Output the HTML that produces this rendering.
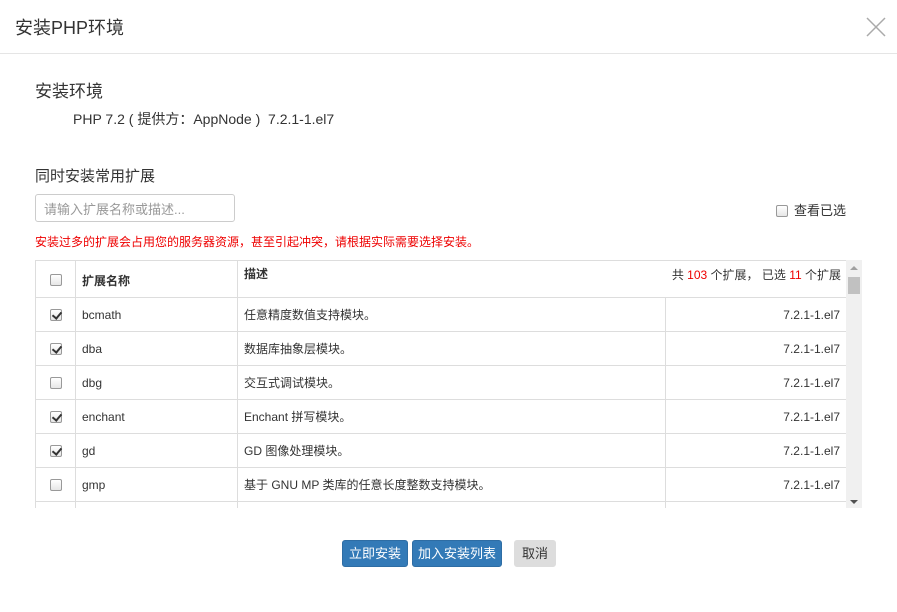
<!DOCTYPE html>
<html><head><meta charset="utf-8"><style>
*{box-sizing:border-box;margin:0;padding:0}
body{width:897px;height:612px;background:#fff;font-family:"Liberation Sans","Noto Sans CJK SC",sans-serif;color:#333;position:relative;overflow:hidden;font-size:12px}
.abs{position:absolute}
.hdr{left:0;top:0;width:897px;height:54px;border-bottom:1px solid #e5e5e5}
.title{left:15px;top:14px;font-size:18px;color:#333}
.cb{display:inline-block;width:12px;height:12px;border:1px solid #999;border-radius:2px;background:linear-gradient(#fff,#e6e6e6);position:relative;vertical-align:middle}
.cb.on::after{content:"";position:absolute;left:3px;top:0px;width:4px;height:7px;border:solid #333;border-width:0 2px 2px 0;transform:rotate(40deg)}
table{border-collapse:collapse;table-layout:fixed}
td,th{border:1px solid #ddd;height:34px;padding:0 6px;font-size:12px;line-height:16px;font-weight:normal;text-align:left;vertical-align:middle}
td span.t,th span.t{display:block;height:16px;line-height:16px;overflow:hidden}
th{font-weight:bold;height:37px}
.btn{position:absolute;top:540px;height:27px;border-radius:3px;color:#fff;background:#337ab7;font-size:13px;text-align:center;line-height:25px;border:1px solid #2e6da4}
</style></head><body>
<div class="abs hdr"></div>
<div class="abs title">安装PHP环境</div>
<svg class="abs" style="left:866px;top:17px" width="20" height="20" viewBox="0 0 20 20"><path d="M1 1L19 19M19 1L1 19" stroke="#aaa" stroke-width="1.5"/></svg>
<div class="abs" style="left:35px;top:77px;font-size:17px">安装环境</div>
<div class="abs" style="left:73px;top:109px;font-size:14px">PHP 7.2 ( 提供方：AppNode )&nbsp; 7.2.1-1.el7</div>
<div class="abs" style="left:35px;top:165px;font-size:15px">同时安装常用扩展</div>
<div class="abs" style="left:35px;top:194px;width:200px;height:28px;border:1px solid #ccc;border-radius:3px;padding:4px 8px;color:#999;font-size:13px">请输入扩展名称或描述...</div>
<div class="abs" style="left:776px;top:200px;font-size:13px"><span class="cb" style="vertical-align:-2px;margin-right:6px"></span>查看已选</div>
<div class="abs" style="left:35px;top:233px;color:#e00;font-size:12px">安装过多的扩展会占用您的服务器资源，甚至引起冲突，请根据实际需要选择安装。</div>
<div class="abs" style="left:35px;top:260px;width:827px;height:248px;overflow:hidden">
<table style="width:811px">
<colgroup><col style="width:40px"><col style="width:162px"><col style="width:428px"><col style="width:181px"></colgroup>
<tr><th style="text-align:center"><span class="cb"></span></th><th style="padding-top:4px"><span class="t">扩展名称</span></th><th colspan="2" style="vertical-align:top;padding-top:5px;position:relative">描述<span style="position:absolute;right:5px;top:6px;font-weight:normal">共 <span style="color:#e00">103</span> 个扩展， 已选 <span style="color:#e00">11</span> 个扩展</span></th></tr>
<tr><td style="text-align:center"><span class="cb on"></span></td><td><span class="t">bcmath</span></td><td><span class="t">任意精度数值支持模块。</span></td><td style="text-align:right"><span class="t">7.2.1-1.el7</span></td></tr>
<tr><td style="text-align:center"><span class="cb on"></span></td><td><span class="t">dba</span></td><td><span class="t">数据库抽象层模块。</span></td><td style="text-align:right"><span class="t">7.2.1-1.el7</span></td></tr>
<tr><td style="text-align:center"><span class="cb"></span></td><td><span class="t">dbg</span></td><td><span class="t">交互式调试模块。</span></td><td style="text-align:right"><span class="t">7.2.1-1.el7</span></td></tr>
<tr><td style="text-align:center"><span class="cb on"></span></td><td><span class="t">enchant</span></td><td><span class="t">Enchant 拼写模块。</span></td><td style="text-align:right"><span class="t">7.2.1-1.el7</span></td></tr>
<tr><td style="text-align:center"><span class="cb on"></span></td><td><span class="t">gd</span></td><td><span class="t">GD 图像处理模块。</span></td><td style="text-align:right"><span class="t">7.2.1-1.el7</span></td></tr>
<tr><td style="text-align:center"><span class="cb"></span></td><td><span class="t">gmp</span></td><td><span class="t">基于 GNU MP 类库的任意长度整数支持模块。</span></td><td style="text-align:right"><span class="t">7.2.1-1.el7</span></td></tr>
<tr><td></td><td></td><td></td><td></td></tr>
</table>
<div class="abs" style="left:811px;top:0;width:16px;height:248px;background:#f0f0f0">
<div class="abs" style="left:4px;top:6px;border:4px solid transparent;border-bottom:4px solid #a0a0a0;border-top:0"></div>
<div class="abs" style="left:2px;top:17px;width:12px;height:17px;background:#c1c1c1"></div>
<div class="abs" style="left:4px;top:240px;border:4px solid transparent;border-top:4px solid #505050;border-bottom:0"></div>
</div>
</div>
<div class="btn" style="left:342px;width:66px">立即安装</div>
<div class="btn" style="left:412px;width:90px">加入安装列表</div>
<div class="btn" style="left:514px;width:42px;background:#ddd;border-color:#ddd;color:#333">取消</div>
</body></html>
